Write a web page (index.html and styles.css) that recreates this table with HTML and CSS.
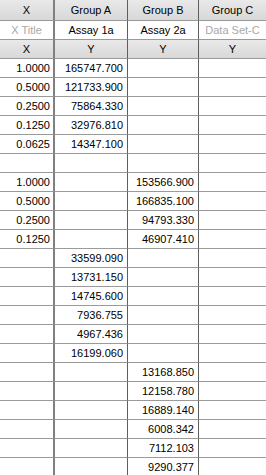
FILE: index.html
```html
<!DOCTYPE html>
<html>
<head>
<meta charset="utf-8">
<link rel="stylesheet" href="styles.css">
</head>
<body>
<table class="sheet">
  <colgroup>
    <col class="c-x"><col class="c-a"><col class="c-b"><col class="c-c">
  </colgroup>
  <thead>
    <tr class="hdr first">
      <th class="cx">X</th><th class="ca">Group A</th><th class="cb">Group B</th><th class="cc">Group C</th>
    </tr>
    <tr class="title">
      <th class="cx ph">X Title</th><th class="ca">Assay 1a</th><th class="cb">Assay 2a</th><th class="cc ph">Data Set-C</th>
    </tr>
    <tr class="hdr">
      <th class="cx">X</th><th class="ca">Y</th><th class="cb">Y</th><th class="cc">Y</th>
    </tr>
  </thead>
  <tbody>
    <tr><td class="cx">1.0000</td><td class="ca">165747.700</td><td class="cb"></td><td class="cc"></td></tr>
    <tr><td class="cx">0.5000</td><td class="ca">121733.900</td><td class="cb"></td><td class="cc"></td></tr>
    <tr><td class="cx">0.2500</td><td class="ca">75864.330</td><td class="cb"></td><td class="cc"></td></tr>
    <tr><td class="cx">0.1250</td><td class="ca">32976.810</td><td class="cb"></td><td class="cc"></td></tr>
    <tr><td class="cx">0.0625</td><td class="ca">14347.100</td><td class="cb"></td><td class="cc"></td></tr>
    <tr><td class="cx"></td><td class="ca"></td><td class="cb"></td><td class="cc"></td></tr>
    <tr><td class="cx">1.0000</td><td class="ca"></td><td class="cb">153566.900</td><td class="cc"></td></tr>
    <tr><td class="cx">0.5000</td><td class="ca"></td><td class="cb">166835.100</td><td class="cc"></td></tr>
    <tr><td class="cx">0.2500</td><td class="ca"></td><td class="cb">94793.330</td><td class="cc"></td></tr>
    <tr><td class="cx">0.1250</td><td class="ca"></td><td class="cb">46907.410</td><td class="cc"></td></tr>
    <tr><td class="cx"></td><td class="ca">33599.090</td><td class="cb"></td><td class="cc"></td></tr>
    <tr><td class="cx"></td><td class="ca">13731.150</td><td class="cb"></td><td class="cc"></td></tr>
    <tr><td class="cx"></td><td class="ca">14745.600</td><td class="cb"></td><td class="cc"></td></tr>
    <tr><td class="cx"></td><td class="ca">7936.755</td><td class="cb"></td><td class="cc"></td></tr>
    <tr><td class="cx"></td><td class="ca">4967.436</td><td class="cb"></td><td class="cc"></td></tr>
    <tr><td class="cx"></td><td class="ca">16199.060</td><td class="cb"></td><td class="cc"></td></tr>
    <tr><td class="cx"></td><td class="ca"></td><td class="cb">13168.850</td><td class="cc"></td></tr>
    <tr><td class="cx"></td><td class="ca"></td><td class="cb">12158.780</td><td class="cc"></td></tr>
    <tr><td class="cx"></td><td class="ca"></td><td class="cb">16889.140</td><td class="cc"></td></tr>
    <tr><td class="cx"></td><td class="ca"></td><td class="cb">6008.342</td><td class="cc"></td></tr>
    <tr><td class="cx"></td><td class="ca"></td><td class="cb">7112.103</td><td class="cc"></td></tr>
    <tr><td class="cx"></td><td class="ca"></td><td class="cb">9290.377</td><td class="cc"></td></tr>
  </tbody>
</table>
</body>
</html>
```
FILE: styles.css
```css
html, body {
  margin: 0;
  padding: 0;
  background: #ffffff;
  overflow: hidden;
}

.sheet {
  border-collapse: separate;
  border-spacing: 0;
  table-layout: fixed;
  width: 266px;
  font-family: "Liberation Sans", Arial, sans-serif;
  font-size: 11px;
  color: #000;
}

.c-x { width: 55px; }
.c-a { width: 73px; }
.c-b { width: 71px; }
.c-c { width: 67px; }

.sheet th,
.sheet td {
  box-sizing: border-box;
  height: 19px;
  padding: 0 4px 0 0;
  border-bottom: 1px solid #9a9a9a;
  white-space: nowrap;
  overflow: hidden;
  line-height: 18px;
}

.sheet th {
  font-weight: normal;
  text-align: center;
  padding: 0;
}

.sheet td {
  text-align: right;
}

.sheet .first th {
  height: 21px;
  line-height: 20px;
}

.hdr th {
  background: linear-gradient(#e9e9e9, #d8d8d8);
}

.title th {
  background: #ffffff;
}

.ph {
  color: #a8a8a8;
}

.cx {
  border-right: 2px solid #808080;
}
.sheet td.cx {
  padding-right: 3px;
}

.ca,
.cb {
  border-right: 1px solid #5e5e5e;
}
```
